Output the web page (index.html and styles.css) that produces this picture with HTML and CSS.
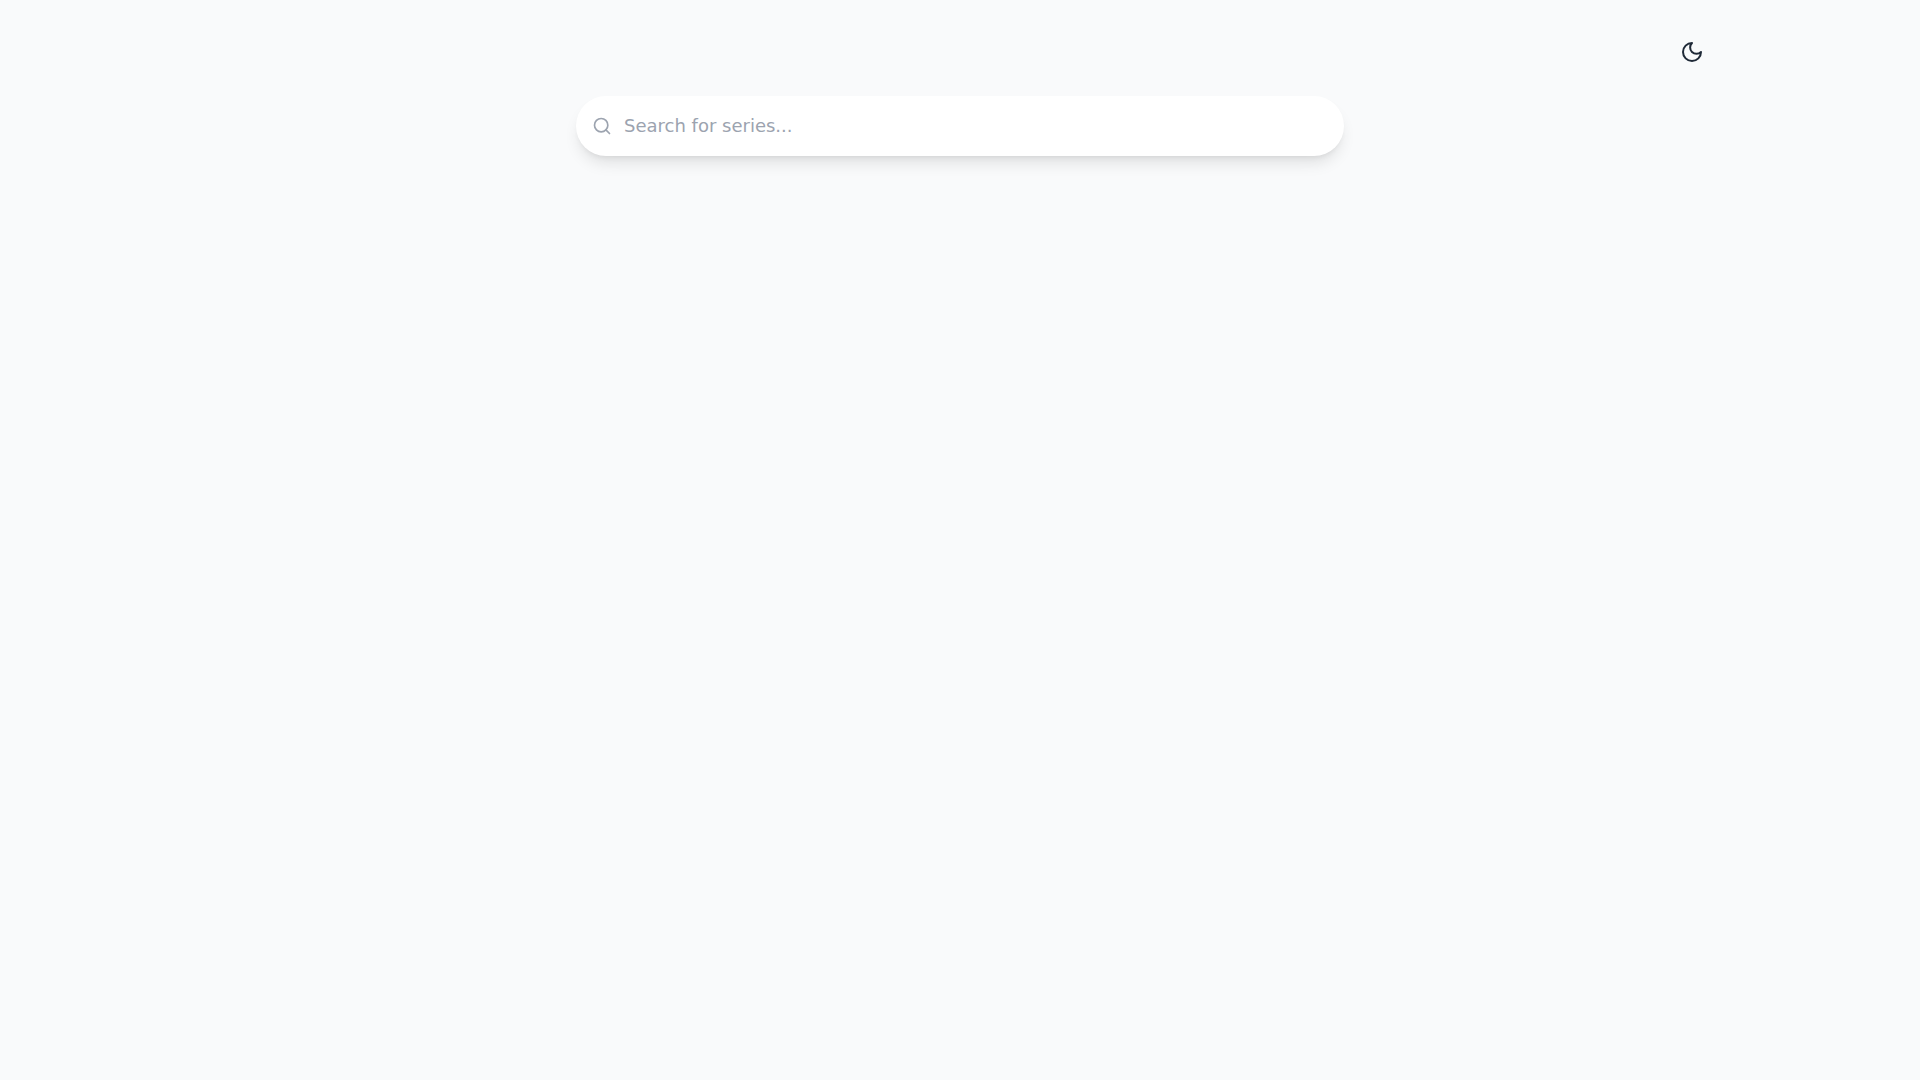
FILE: index.html
```html
<!DOCTYPE html>
<html lang="en">
<head>
  <meta charset="utf-8">
  <meta name="viewport" content="width=device-width, initial-scale=1">
  <title>Series Search</title>
  <link rel="stylesheet" href="styles.css">
</head>
<body>
  <div class="container">
    <header class="header">
      <button class="theme-toggle" type="button" aria-label="Toggle dark mode">
        <svg class="icon-moon" viewBox="0 0 24 24" aria-hidden="true"><path d="M12 3a6 6 0 0 0 9 9 9 9 0 1 1-9-9Z"/></svg>
      </button>
    </header>
    <main>
      <form class="search" role="search">
        <label class="search-label" for="query" aria-label="Search for series">
          <svg class="icon-search" viewBox="0 0 24 24" aria-hidden="true"><circle cx="11" cy="11" r="8"/><path d="m21 21-4.3-4.3"/></svg>
        </label>
        <input class="search-input" id="query" type="text" placeholder="Search for series...">
      </form>
    </main>
  </div>
</body>
</html>
```
FILE: styles.css
```css
* {
  box-sizing: border-box;
}

body {
  margin: 0;
  min-height: 100vh;
  background: #f9fafb;
  color: #1f2937;
  font-family: "DejaVu Sans", sans-serif;
  font-size: 16px;
  line-height: 24px;
}

.container {
  max-width: 1536px;
  margin: 0 auto;
  padding: 32px 16px;
}

.header {
  display: flex;
  justify-content: flex-end;
  margin-bottom: 24px;
}

.theme-toggle {
  display: flex;
  padding: 8px;
  border: 0;
  border-radius: 9999px;
  background: transparent;
  color: inherit;
  cursor: pointer;
}

.icon-moon,
.icon-search {
  display: block;
  fill: none;
  stroke: currentColor;
  stroke-width: 2;
  stroke-linecap: round;
  stroke-linejoin: round;
}

.icon-moon {
  width: 24px;
  height: 24px;
}

.icon-search {
  width: 20px;
  height: 20px;
}

.search {
  display: flex;
  align-items: center;
  max-width: 768px;
  margin: 0 auto;
  border-radius: 9999px;
  background: #fff;
  box-shadow: 0 10px 15px -3px rgb(0 0 0 / 0.1), 0 4px 6px -4px rgb(0 0 0 / 0.1);
}

.search-label {
  padding-left: 16px;
  color: #9ca3af;
}

.search-input {
  flex: 1;
  min-width: 0;
  padding: 16px 16px 16px 12px;
  border: 0;
  border-radius: 9999px;
  outline: none;
  background: transparent;
  color: inherit;
  font: inherit;
  font-size: 18px;
  line-height: 28px;
}

.search-input::placeholder {
  color: #9ca3af;
}
```
